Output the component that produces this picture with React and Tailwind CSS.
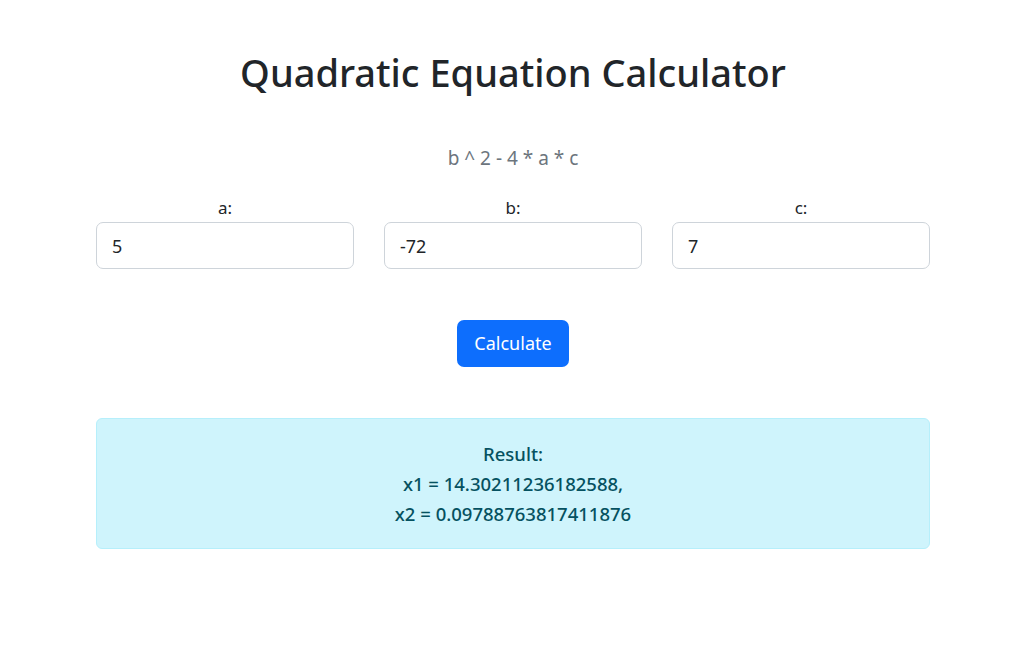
const inputs = [
  { label: "a:", value: "5" },
  { label: "b:", value: "-72" },
  { label: "c:", value: "7" },
];

const App = () => {
  return (
    <div className="min-h-screen bg-white font-['Noto_Sans',sans-serif] text-[#212529]">
      <div className="ml-[96px] w-[834px] pt-[48px]">
        <h1 className="text-center text-[38px] font-medium leading-[48px]">
          Quadratic Equation Calculator
        </h1>
        <p className="mt-[47px] text-center text-[19px] font-normal leading-[30px] text-[#6c757d]">
          b ^ 2 - 4 * a * c
        </p>
        <div className="mt-[20px] grid grid-cols-3 gap-[30px]">
          {inputs.map((item) => (
            <div key={item.label} className="flex flex-col">
              <label className="text-center text-[17px] leading-[29px]">
                {item.label}
              </label>
              <input
                type="text"
                defaultValue={item.value}
                className="h-[47px] w-full rounded-[7px] border border-[#ced4da] px-[15px] text-[18px] text-[#212529] outline-none"
              />
            </div>
          ))}
        </div>
        <div className="mt-[51px] flex justify-center">
          <button className="h-[47px] rounded-[7px] bg-[#0d6efd] px-[17px] text-[18px] text-white">
            Calculate
          </button>
        </div>
        <div className="mt-[51px] flex h-[131px] flex-col items-center justify-center rounded-[6px] border border-[#b6effb] bg-[#cff4fc] text-[18.5px] font-medium leading-[30px] text-[#055160]">
          <div>Result:</div>
          <div>x1 = 14.30211236182588,</div>
          <div>x2 = 0.09788763817411876</div>
        </div>
      </div>
    </div>
  );
};

export default App;
